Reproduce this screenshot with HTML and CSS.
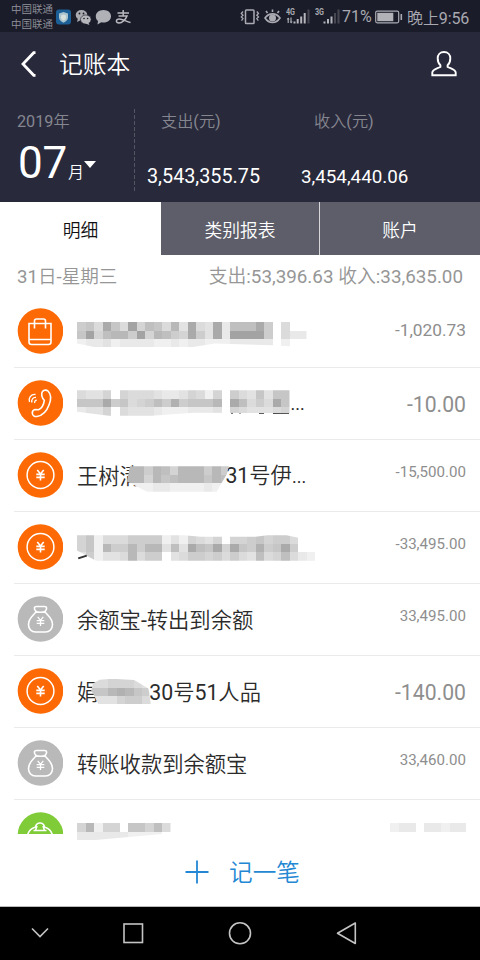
FILE: index.html
```html
<!DOCTYPE html>
<html lang="zh-CN">
<head>
<meta charset="utf-8">
<title>记账本</title>
<link rel="stylesheet" href="styles.css">
</head>
<body>
<svg class="defs" width="0" height="0">
  <symbol id="coin" viewBox="0 0 46 46">
    <circle cx="23.500" cy="23" r="13.400" stroke-width="1.500"/>
    <path d="M20.300 18l3.200 4 3.200-4M19.300 22.400h8.400M19.300 25.400h8.400M23.500 22v6.500" stroke-width="1.600"/>
  </symbol>
  <symbol id="bag" viewBox="0 0 46 46">
    <path d="M19 15.500c-2.500-3-2-5 .5-5h8c2.500 0 3 2 .5 5M19 15.500c-1 3-7.500 6-7.500 13 0 4.500 3 7.500 7 7.500h10c4 0 7-3 7-7.500 0-7-6.500-10-7.500-13-1.500 1-7.500 1-9 0z" stroke-width="1.600"/>
    <path d="M20.700 20.800l2.800 3.500 2.800-3.500M19.700 24.700h7.600M19.700 27.300h7.600M23.500 24v6" stroke-width="1.300"/>
  </symbol>
</svg>

<header class="status">
  <div class="carriers"><span>中国联通</span><span>中国联通</span></div>
  <svg class="apps" width="76" height="18" viewBox="0 0 76 18">
    <rect x="0" y="1.500" width="15" height="15" rx="3" fill="#1b5f96"/>
    <path d="M7.500 4l4.500 1.500v4c0 2.500-2 4-4.500 5.200C5 13.500 3 12 3 9.500v-4z" fill="#a9c4ce"/>
    <path d="M7.500 6.500l2.500 1v2c0 1.500-1 2.200-2.500 3-1.500-.800-2.500-1.500-2.500-3v-2z" fill="#d8e0dc"/>
    <ellipse cx="25.500" cy="7" rx="5.800" ry="4.900" fill="#aaabb1"/><path d="M22 10l-1 4 4-2z" fill="#aaabb1"/>
    <ellipse cx="29.800" cy="11.500" rx="5.300" ry="4.500" fill="#b5b6bb" stroke="#1b1c2a" stroke-width=".6"/><path d="M32 14l1.500 3-4-1.500z" fill="#b5b6bb"/>
    <g fill="#1b1c2a"><circle cx="23.500" cy="5.500" r=".9"/><circle cx="27.500" cy="5.500" r=".9"/><circle cx="28" cy="10.500" r=".8"/><circle cx="31.600" cy="10.500" r=".8"/></g>
    <path d="M47.500 2c4.500 0 7.500 2.800 7.500 6.200s-3 6.300-7.500 6.300c-.7 0-1.500 0-2.200-.2L41.500 16.500l.5-3.500c-1.500-1.200-2.200-2.900-2.200-4.800C39.800 4.800 43 2 47.500 2z" fill="#b0b1b6"/>
    <path d="M61.500 5h11.500M67.200 2v6M62.500 8h8.500c-1.500 4-5 7-8 7-3.500 0-3.500-4 .5-4 3.500 0 7 3 11 3.500" fill="none" stroke="#b9babf" stroke-width="1.500"/>
  </svg>
  <div class="grow"></div>
  <svg class="vib" width="20" height="18" viewBox="0 0 20 18" fill="none" stroke="#aaabb2" stroke-width="1.500">
    <rect x="5.500" y="2" width="8.500" height="13.500" rx=".8"/><path d="M3 3.500L1.300 5.500l1.700 1.700-1.700 1.700L3 10.600l-1.500 2M16.800 3.500l1.700 2-1.700 1.700 1.700 1.700-1.700 1.700 1.500 2" stroke-width="1.300"/>
  </svg>
  <svg class="eye" width="17" height="18" viewBox="0 0 17 18" fill="none" stroke="#aaabb2" stroke-width="1.600">
    <path d="M1 10c4-5.500 11-5.500 15 0-4 6-11 6-15 0zM3.500 5L2 3M8.500 4V1.500M13.500 5L15 3"/><circle cx="8.500" cy="10" r="2.700" fill="#aaabb2"/>
  </svg>
  <svg class="sig" width="25" height="18" viewBox="0 0 25 18">
    <text x="0" y="7.300" textLength="9" lengthAdjust="spacingAndGlyphs">4G</text>
    <path d="M2.200 15v-5M5 9.500v5" stroke="#aaabb2" stroke-width="1.200"/><path d="M.7 11.500l1.500-2 1.500 2zM3.700 13.500l1.500 2 1.500-2z" fill="#aaabb2"/>
    <path d="M8.500 15.500v-2M11.700 15.500V11M15.200 15.500V8.500M18.700 15.500V5" stroke="#b4b5bb" stroke-width="2"/><path d="M22.500 15.500V1.500" stroke="#464751" stroke-width="2"/>
  </svg>
  <svg class="sig sig3" width="25" height="18" viewBox="0 0 25 18">
    <text x="0" y="7.300" textLength="9" lengthAdjust="spacingAndGlyphs">3G</text>
    <path d="M9.500 15.500v-2M13 15.500V11M16.500 15.500V8.500" stroke="#b4b5bb" stroke-width="2"/><path d="M20 15.500V5M23.500 15.500V1.500" stroke="#464751" stroke-width="2"/>
  </svg>
  <span class="pct">71%</span>
  <svg class="bat" width="28" height="14" viewBox="0 0 28 14"><rect x=".7" y="1.200" width="23" height="11.600" rx="1.500" fill="none" stroke="#aaabb2" stroke-width="1.200"/><rect x="2.300" y="2.800" width="16" height="8.400" fill="#b1b2b8"/><path d="M26.300 4v6" stroke="#aaabb2" stroke-width="1.600"/></svg>
  <span class="clock">晚上9:56</span>
</header>

<div class="titlebar">
  <svg width="18" height="26" viewBox="0 0 18 26"><path d="M16.500 1.700h-1.800L4 13l10.700 11.300h1.800" fill="none" stroke="#fff" stroke-width="2.800"/></svg>
  <h1>记账本</h1>
  <svg width="28" height="28" viewBox="0 0 28 28"><path d="M14 2c-4 0-6.300 2.800-6.300 6.300 0 3 .8 5.200 2.700 7v1.700C6 19 2.500 19.500 2.300 22.500V25.300h23.400V22.500C25.500 19.500 22 19 17.600 17v-1.700c1.900-1.800 2.700-4 2.700-7C20.300 4.800 18 2 14 2z" fill="none" stroke="#fff" stroke-width="1.900"/></svg>
</div>

<section class="summary">
  <div class="month">
    <span class="label">2019年</span>
    <div class="pick"><b>07</b><span>月</span><i></i></div>
  </div>
  <svg class="dash" width="2" height="82"><path d="M.5 0v82" stroke="#555664" stroke-width="1" stroke-dasharray="4 2"/></svg>
  <div class="sum out"><span class="label">支出(元)</span><strong>3,543,355.75</strong></div>
  <div class="sum in"><span class="label">收入(元)</span><strong>3,454,440.06</strong></div>
</section>

<nav class="tabs"><a class="on">明细</a><a>类别报表</a><a>账户</a></nav>

<div class="day"><span>31日-星期三</span><span class="totals">支出:53,396.63 收入:33,635.00</span></div>

<main class="list">
  <div class="item">
    <svg class="ic orange" viewBox="0 0 46 46"><path d="M12 15.500h22V34a2.500 2.500 0 0 1-2.500 2.500h-17A2.500 2.500 0 0 1 12 34zM12 31.500h22M17.500 20.500V13c0-1.500.5-2 2-2h7c1.500 0 2 .5 2 2v7.500" stroke-width="1.600"/></svg>
    <div class="name"><svg class="mosaic m1" data-cells="674b74c587493b43b2888b60400|7c58996c59865b63b2cccc60422|122312222112122111222220100"></svg></div>
    <span class="amt mid">-1,020.73</span>
  </div>
  <div class="item">
    <svg class="ic orange" viewBox="0 0 46 46"><path d="M25.500 11.500c1.500-1.800 4-1.800 5.500-.5 3 3 3.200 8.500 1 14-2 5.500-6.500 10.500-12 11.500-2.500.4-4.500-1-4.700-3.200-.2-2 1-3.300 2.700-3.800l3.500.3c3-1.500 5.300-5.300 5.800-9.500-2.500-2.500-3.500-6.500-1.800-8.800z" stroke-width="1.600"/><path d="M12.500 22c-1.500-4 1.500-8 6-7.500M15 22.500c-1-2.500 1-5.500 4-5M17.800 23c-.5-1.500.3-2.800 2-2.800" stroke-width="1.300"/></svg>
    <div class="name"><svg class="mosaic m2" data-cells="4335054443223541506437377|777b6745686a677790b8464b7|2335043332111222305433345"></svg><span class="scrap"></span><span class="more">...</span></div>
    <span class="amt big">-10.00</span>
  </div>
  <div class="item">
    <svg class="ic orange"><use href="#coin"/></svg>
    <div class="name"><span>王树清</span><svg class="mosaic m3" data-cells="996985999696|995978999798|111221111211"></svg><span class="tail">, 31号伊<span class="dots">...</span></span></div>
    <span class="amt">-15,500.00</span>
  </div>
  <div class="item">
    <svg class="ic orange"><use href="#coin"/></svg>
    <div class="name"><svg class="mosaic m4" data-cells="5714446666131543505567566400|5719669699383b87b5b76a67b600|3613349466034665646438458421"></svg><span class="stroke"></span></div>
    <span class="amt">-33,495.00</span>
  </div>
  <div class="item">
    <svg class="ic gray"><use href="#bag"/></svg>
    <div class="name">余额宝-转出到余额</div>
    <span class="amt">33,495.00</span>
  </div>
  <div class="item">
    <svg class="ic orange"><use href="#coin"/></svg>
    <div class="name"><span>娟</span><svg class="mosaic m6" data-cells="4455543|779a976|3335664"></svg><span class="tail2">-30号51人品</span></div>
    <span class="amt big">-140.00</span>
  </div>
  <div class="item">
    <svg class="ic gray"><use href="#bag"/></svg>
    <div class="name">转账收款到余额宝</div>
    <span class="amt">33,460.00</span>
  </div>
  <div class="item last">
    <div class="cut"><svg class="ic green" viewBox="0 0 46 46"><path d="M10.500 23c1.500-5 4.500-7 8-8 .5-2.500 2-4 4.500-4s4 1.500 4.500 4c3.500 1 6.500 3 8 8M16.500 18.500h13M18.500 18.500l1.500-4.500M27.500 18.500l-1.500-4.500" stroke-width="1.600"/></svg></div>
    <div class="name"><svg class="mosaic m8" data-cells="59155077584|22222211110"></svg></div>
    <svg class="mosaic m9" data-cells="122022122"></svg>
  </div>
</main>

<footer class="add">
  <svg width="24" height="24" viewBox="0 0 24 24"><path d="M12 .5v23M.5 12h23" stroke="#2387d3" stroke-width="1.800"/></svg>
  <span>记一笔</span>
</footer>

<nav class="sys">
  <svg width="480" height="53" viewBox="0 0 480 53" fill="none" stroke="#c4c4c4" stroke-width="1.600">
    <path d="M32 21.500l8 8 8-8"/><rect x="124" y="17" width="18.500" height="18.500"/><circle cx="240" cy="26.300" r="10.500"/><path d="M355.300 16v20.500L337.500 26.300z" stroke-linejoin="round"/>
  </svg>
</nav>
<script src="mosaic.js"></script>
</body>
</html>
```
FILE: styles.css
```css
* { box-sizing: border-box; }
body {
  margin: 0; width: 480px; height: 960px; overflow: hidden;
  display: flex; flex-direction: column; background: #fff;
  font-family: Roboto, "Noto Sans CJK SC DemiLight", "Noto Sans CJK SC Light", "Noto Sans CJK SC", sans-serif;
}
svg { display: block; flex: none; }
span, strong, b { white-space: nowrap; }
.defs { display: none; }

.status { height: 32px; background: #1b1c2a; display: flex; align-items: center; color: #a9aab1; padding: 1px 11px 0; flex: none; }
.carriers { display: flex; flex-direction: column; font-size: 10.500px; line-height: 14.500px; width: 45px; color: #92939b; padding-top: 2px; }
.grow { flex: 1; }
.eye { margin-left: 4px; }
.sig { margin-left: 5px; }
.sig3 { margin-left: 4px; }
.sig text { font: 700 9px Roboto, sans-serif; fill: #aaabb2; }
.pct { font-size: 16px; margin-left: 2px; width: 33px; }
.bat { margin-right: 4px; }
.clock { font-size: 16px; width: 62px; letter-spacing: -.1px; }

.titlebar { height: 64px; background: #28293b; display: flex; align-items: center; padding: 0 22px 0 19px; flex: none; }
.titlebar h1 { flex: 1; margin: 2px 0 0 22px; font-size: 23.800px; font-weight: 400; color: #fff; line-height: 32px; }

.summary { height: 106px; background: #28293b; display: flex; padding: 12px 0 0 18px; flex: none; }
.label { font-size: 16.200px; line-height: 24px; color: #85868f; }
.month { width: 116px; display: flex; flex-direction: column; padding-top: 2px; }
.month .label { margin-left: -1px; }
.pick { display: flex; align-items: baseline; color: #fff; line-height: 54px; margin-top: 2px; }
.pick b { font-weight: 400; font-size: 44px; width: 50px; letter-spacing: -.3px; }
.pick span { font-size: 16px; }
.pick i { border: 6px solid transparent; border-top: 7px solid #fff; border-bottom: 0; align-self: flex-start; margin: 25px 0 0 0; }
.dash { margin-top: 1px; }
.sum { display: flex; flex-direction: column; padding-top: 2px; }
.sum .label { padding-left: 14px; }
.sum strong { font-weight: 400; color: #fff; line-height: 24px; margin-top: 31px; }
.out { margin-left: 11px; width: 154px; }
.sum.in .label { padding-left: 13px; }
.out strong { font-size: 19.800px; }
.in strong { font-size: 18.800px; }

.tabs { height: 53px; display: flex; font-size: 17.800px; line-height: 57px; text-align: center; color: #fff; background: #5d5e6a; flex: none; }
.tabs a { flex: 1; }
.tabs .on { flex: 0 0 161px; background: #fff; color: #111; }
.tabs a:nth-child(2) { flex: 0 0 159px; border-right: 1px solid #d5d5da; }

.day { height: 41px; display: flex; justify-content: space-between; padding: 0 17px 0 17px; font-size: 18.600px; line-height: 44px; color: #969696; flex: none; }
.totals { font-size: 18.820px; }

.list { height: 546px; padding-left: 14px; flex: none; }
.item { height: 72px; display: flex; align-items: center; padding: 0 14px 0 3px; border-bottom: 1px solid #eaeaea; }
.ic { width: 46px; height: 46px; fill: none; stroke: #fff; margin-top: -1px; clip-path: circle(22.800px at 23.500px 23px); }
.orange { background: #fd6a05; }
.gray { background: #b9b9b9; }
.green { background: #7fcb38; margin: 0; }
.name { flex: 1; display: flex; align-items: center; margin-left: 14px; font-size: 21.300px; line-height: 32px; color: #2b2b2b; height: 32px; padding-top: 2px; }
.amt { font-size: 15.100px; color: #8e8e8e; line-height: 20px; margin-bottom: 8px; }
.amt.mid { font-size: 17.300px; margin-bottom: 4px; }
.amt.big { font-size: 21.200px; margin-bottom: 0; padding-top: 2px; }
.mosaic { overflow: hidden; shape-rendering: crispEdges; }
.m1 { margin-top: 4px; clip-path: polygon(0 0, 100% 0, 100% 100%, 85% 92%, 60% 85%, 50% 100%, 8% 100%, 0 85%); }
.m2 { margin-top: -3px; clip-path: polygon(0 0, 100% 0, 100% 90%, 55% 88%, 35% 100%, 15% 100%, 0 84%); }
.scrap { width: 58px; height: 2px; margin: 16px 0 0 -59px; background: linear-gradient(90deg, #777 2px, transparent 2px 8px, #aaa 8px 10px, transparent 10px 28px, #555 28px 33px, transparent 33px 42px, #333 42px); }
.more { margin-left: 2px; font-size: 18px; height: 34px; }
.m3 { margin: 5px 0 0 -14px; clip-path: polygon(3% 0, 100% 0, 98% 30%, 88% 100%, 20% 100%, 0 60%); }
.tail { margin-left: -13px; }
.dots { font-size: 18px; }
.m4 { margin-top: -1px; clip-path: polygon(0 0, 45% 0, 52% 6%, 75% 6%, 80% 0, 88% 0, 94% 12%, 94% 60%, 100% 66%, 100% 100%, 8% 100%, 0 60%); }
.stroke { width: 9px; height: 2px; background: #333; transform: rotate(-18deg); margin: 17px 0 0 -237px; }
.m6 { margin: -2px 0 0 -7px; clip-path: polygon(14% 4%, 35% 0, 72% 5%, 96% 38%, 100% 100%, 12% 100%, 0 45%, 3% 18%); }
.tail2 { margin-left: -7.500px; }
.last { height: 42px; border: 0; align-items: flex-start; }
.cut { height: 22px; margin-top: 12px; overflow: hidden; }
.last .name { padding: 0; height: auto; align-items: flex-start; }
.m8 { margin-top: 23px; clip-path: polygon(0 0, 100% 0, 100% 60%, 20% 100%, 0 100%); }
.m9 { margin-top: 23px; }

.add { flex: 1; display: flex; align-items: center; justify-content: center; gap: 20px; color: #2387d3; font-size: 23.600px; padding: 0 0 5px 5px; border-bottom: 1px solid #bbb; }
.add span { margin-top: -1px; }
.sys { height: 53px; background: #000; flex: none; }
```
FILE: mosaic.js
```js
// Builds censored-text blocks: one hex digit per cell, rows separated by "|".
const CELL = 8.5;
for (const svg of document.querySelectorAll('.mosaic')) {
  const rows = svg.dataset.cells.split('|');
  const cols = Math.max(...rows.map(r => r.length));
  svg.setAttribute('width', cols * CELL);
  svg.setAttribute('height', rows.length * CELL);
  rows.forEach((row, y) => [...row].forEach((digit, x) => {
    const level = parseInt(digit, 16);
    if (!level) return;
    const grey = 247 - level * 7;
    const rect = document.createElementNS('http://www.w3.org/2000/svg', 'rect');
    rect.setAttribute('x', x * CELL);
    rect.setAttribute('y', y * CELL);
    rect.setAttribute('width', CELL);
    rect.setAttribute('height', CELL);
    rect.setAttribute('fill', `rgb(${grey},${grey},${grey})`);
    svg.appendChild(rect);
  }));
}
```
